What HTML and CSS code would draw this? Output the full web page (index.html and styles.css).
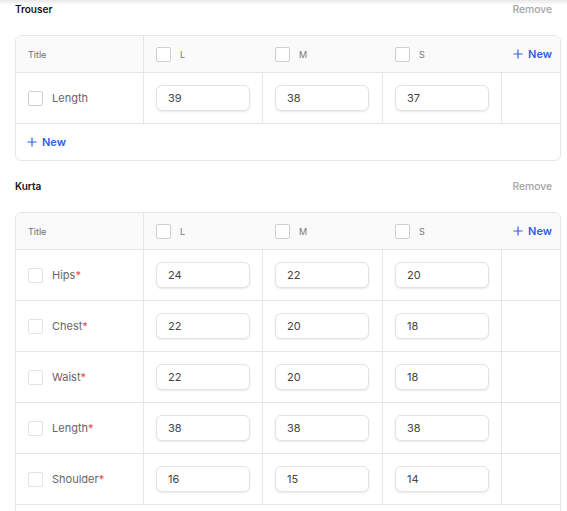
FILE: index.html
```html
<!DOCTYPE html>
<html>
<head>
<meta charset="utf-8">
<link rel="stylesheet" href="styles.css">
</head>
<body>
<div class="topshadow"></div>
<div class="page">
  <section class="section">
    <div class="section-head">
      <span class="section-title">Trouser</span>
      <span class="remove">Remove</span>
    </div>
    <div class="card">
      <div class="row head">
        <div class="cell title-cell"><span class="head-label">Title</span></div>
        <div class="cell size-cell"><span class="cb"></span><span class="size-label">L</span></div>
        <div class="cell size-cell"><span class="cb"></span><span class="size-label">M</span></div>
        <div class="cell size-cell"><span class="cb"></span><span class="size-label">S</span></div>
        <div class="cell new-cell"><span class="new"><svg class="plus" viewBox="0 0 10 10"><path d="M5 0.5V9.5M0.5 5H9.5"/></svg>New</span></div>
      </div>
      <div class="row body">
        <div class="cell title-cell"><span class="cb"></span><span class="label">Length</span></div>
        <div class="cell input-cell"><div class="input">39</div></div>
        <div class="cell input-cell"><div class="input">38</div></div>
        <div class="cell input-cell"><div class="input">37</div></div>
        <div class="cell end-cell"></div>
      </div>
      <div class="foot">
        <span class="new"><svg class="plus" viewBox="0 0 10 10"><path d="M5 0.5V9.5M0.5 5H9.5"/></svg>New</span>
      </div>
    </div>
  </section>

  <section class="section">
    <div class="section-head">
      <span class="section-title">Kurta</span>
      <span class="remove">Remove</span>
    </div>
    <div class="card">
      <div class="row head">
        <div class="cell title-cell"><span class="head-label">Title</span></div>
        <div class="cell size-cell"><span class="cb"></span><span class="size-label">L</span></div>
        <div class="cell size-cell"><span class="cb"></span><span class="size-label">M</span></div>
        <div class="cell size-cell"><span class="cb"></span><span class="size-label">S</span></div>
        <div class="cell new-cell"><span class="new"><svg class="plus" viewBox="0 0 10 10"><path d="M5 0.5V9.5M0.5 5H9.5"/></svg>New</span></div>
      </div>
      <div class="row body">
        <div class="cell title-cell"><span class="cb light"></span><span class="label">Hips<span class="req">*</span></span></div>
        <div class="cell input-cell"><div class="input">24</div></div>
        <div class="cell input-cell"><div class="input">22</div></div>
        <div class="cell input-cell"><div class="input">20</div></div>
        <div class="cell end-cell"></div>
      </div>
      <div class="row body">
        <div class="cell title-cell"><span class="cb light"></span><span class="label">Chest<span class="req">*</span></span></div>
        <div class="cell input-cell"><div class="input">22</div></div>
        <div class="cell input-cell"><div class="input">20</div></div>
        <div class="cell input-cell"><div class="input">18</div></div>
        <div class="cell end-cell"></div>
      </div>
      <div class="row body">
        <div class="cell title-cell"><span class="cb light"></span><span class="label">Waist<span class="req">*</span></span></div>
        <div class="cell input-cell"><div class="input">22</div></div>
        <div class="cell input-cell"><div class="input">20</div></div>
        <div class="cell input-cell"><div class="input">18</div></div>
        <div class="cell end-cell"></div>
      </div>
      <div class="row body">
        <div class="cell title-cell"><span class="cb light"></span><span class="label">Length<span class="req">*</span></span></div>
        <div class="cell input-cell"><div class="input">38</div></div>
        <div class="cell input-cell"><div class="input">38</div></div>
        <div class="cell input-cell"><div class="input">38</div></div>
        <div class="cell end-cell"></div>
      </div>
      <div class="row body">
        <div class="cell title-cell"><span class="cb light"></span><span class="label">Shoulder<span class="req">*</span></span></div>
        <div class="cell input-cell"><div class="input">16</div></div>
        <div class="cell input-cell"><div class="input">15</div></div>
        <div class="cell input-cell"><div class="input">14</div></div>
        <div class="cell end-cell"></div>
      </div>
      <div class="foot">
        <span class="new"><svg class="plus" viewBox="0 0 10 10"><path d="M5 0.5V9.5M0.5 5H9.5"/></svg>New</span>
      </div>
    </div>
  </section>
</div>
</body>
</html>
```

FILE: styles.css
```css
* { box-sizing: border-box; }
html, body { margin: 0; padding: 0; background: #fff; }
body {
  font-family: Inter, "Noto Sans", "Liberation Sans", sans-serif;
  color: #333;
  overflow: hidden;
}
.topshadow {
  position: fixed;
  top: 0; left: 0; right: 0;
  height: 5px;
  background: linear-gradient(to bottom, rgba(0,0,0,0.09), rgba(0,0,0,0));
  pointer-events: none;
}
.page {
  padding: 0 6px 0 15px;
  display: flex;
  flex-direction: column;
  gap: 16px;
}
.section { display: flex; flex-direction: column; gap: 17px; }
.section-head {
  height: 18px;
  display: flex;
  align-items: center;
  justify-content: space-between;
  padding-right: 9px;
}
.section-title { font-size: 10px; font-weight: 600; color: #151515; }
.remove { font-size: 10.3px; font-weight: 500; color: #a3a3a3; }
.card {
  border: 1px solid #e6e6e6;
  border-radius: 6px;
  overflow: hidden;
  background: #fff;
}
.row {
  display: grid;
  grid-template-columns: 128px 119px 120px 119px 1fr;
  border-bottom: 1px solid #e6e6e6;
}
.row.head { background: #fafafa; height: 37px; }
.row.body { height: 51px; }
.cell {
  display: flex;
  align-items: center;
  padding-left: 12px;
}
.row.body .cell { border-right: 1px solid #e6e6e6; }
.row.body .cell.end-cell { border-right: none; }
.row.head .title-cell { border-right: 1px solid #e6e6e6; }
.head-label { font-size: 9px; color: #6e6e6e; }
.cb {
  width: 15px; height: 15px;
  border: 1px solid #cfcfcf;
  border-radius: 2px;
  background: #fff;
  flex: none;
}
.cb.light { border-color: #e3e3e3; }
.size-label { font-size: 9px; color: #777; margin-left: 9px; }
.label { font-size: 11px; color: #666; margin-left: 9px; }
.req { color: #e5484d; }
.new-cell { justify-content: flex-end; padding-right: 8px; padding-left: 0; }
.new {
  display: inline-flex;
  align-items: center;
  gap: 5px;
  font-size: 11px;
  font-weight: 600;
  color: #2f5fe3;
}
.plus { width: 10px; height: 10px; }
.plus path { stroke: #2f5fe3; stroke-width: 1.2; fill: none; }
.input {
  width: 94px;
  height: 26px;
  border: 1px solid #e3e3e3;
  border-radius: 6px;
  box-shadow: 0 1px 2px rgba(0,0,0,0.09);
  padding-left: 11px;
  display: flex;
  align-items: center;
  font-size: 11px;
  color: #444;
  background: #fff;
}
.foot {
  height: 36px;
  display: flex;
  align-items: center;
  padding-left: 11px;
}
```
